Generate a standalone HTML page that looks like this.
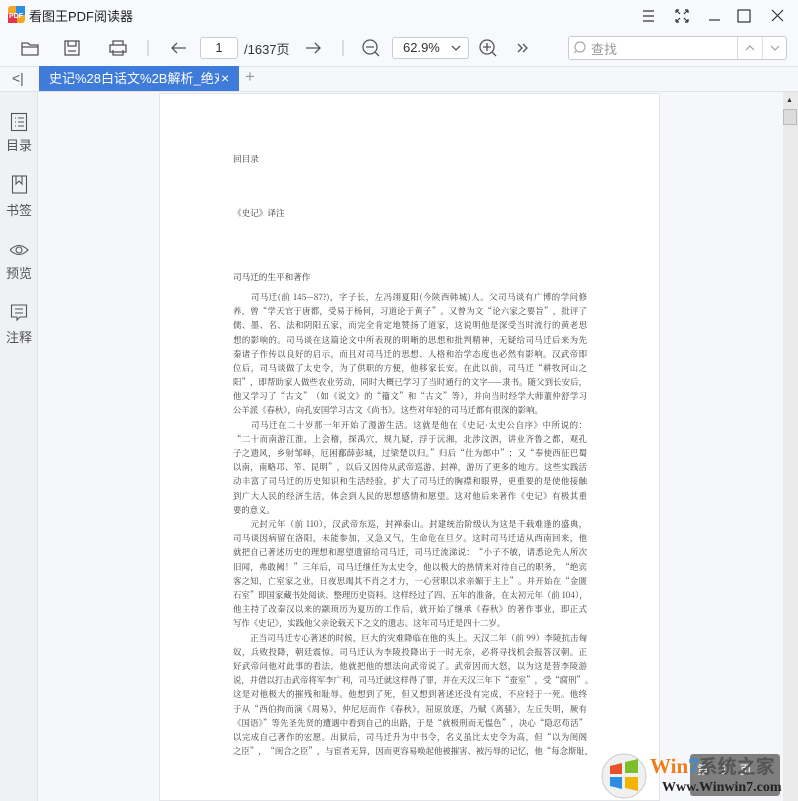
<!DOCTYPE html>
<html><head><meta charset="utf-8"><style>
*{margin:0;padding:0;box-sizing:border-box}
body{width:798px;height:801px;overflow:hidden;background:#f5f7fa;font-family:"Liberation Sans","Noto Sans CJK SC",sans-serif;position:relative;color:#333}
.abs{position:absolute}
#title{left:0;top:0;width:798px;height:66px;background:#f7f9fc}
#tabs{left:0;top:66px;width:798px;height:26px;background:#f5f7fa;border-top:1px solid #e3e6ea;border-bottom:1px solid #dfe2e6}
#side{left:0;top:92px;width:38px;height:709px;background:#eff1f4;border-right:1px solid #e0e3e7}
.sl{position:absolute;left:0;width:38px;text-align:center;font-size:13px;color:#555}
#page{left:159px;top:93px;width:501px;height:708px;background:#fff;border:1px solid #e2e4e8}
.t{position:absolute;left:233px;width:354px;font-family:"Noto Serif CJK SC","Liberation Serif",serif;font-size:8.4px;line-height:10px;color:#3a3a3a;white-space:nowrap;text-align:justify;text-align-last:justify}
.t.l{text-align-last:left}
.h{position:absolute;left:233px;font-family:"Noto Serif CJK SC",serif;font-size:8.6px;color:#333}
svg{position:absolute}
</style></head><body>
<div id="title" class="abs"></div>
<svg style="left:8px;top:6px" width="17" height="17"><rect width="17" height="17" rx="3" fill="#f5a623"/><rect x="0" y="8" width="9" height="9" fill="#e2344b"/><rect x="8" y="0" width="9" height="9" fill="#2d8de3"/><text x="1" y="12" font-size="7" fill="#fff" font-family="Liberation Sans" font-weight="bold">PDF</text></svg>
<div class="abs" style="left:29px;top:6px;font-size:13px;color:#222">看图王PDF阅读器</div>
<svg style="left:640px;top:8px" width="150" height="16" fill="none" stroke="#333" stroke-width="1.2">
<path d="M3 3h11M3 8h11M3 13h11"/>
<path d="M36 2l4 4M36 2h3M36 2v3M48 2l-4 4M48 2h-3M48 2v3M36 14l4-4M36 14h3M36 14v-3M48 14l-4-4M48 14h-3M48 14v-3"/>
<path d="M69 12h11"/>
<rect x="98" y="2" width="12" height="12"/>
<path d="M132 2l11 11M143 2l-11 11"/>
</svg>
<svg style="left:18px;top:37px" width="350" height="22" fill="none" stroke="#555" stroke-width="1.3">
<path d="M4 6h6l2 2h8v10H4z M4 10h16"/>
<rect x="47" y="4" width="14" height="14"/><path d="M50 4v5h8V4M50 14h8"/>
<rect x="92" y="8" width="16" height="7"/><path d="M95 8V4h10v4M95 13v5h10v-5"/>
<path d="M130 3v16" stroke="#ccc"/>
<path d="M168 11h-14M159 6l-5 5 5 5"/>
</svg>
<div class="abs" style="left:200px;top:37px;width:38px;height:22px;border:1px solid #c9cdd2;border-radius:3px;background:#fff;font-size:13px;text-align:center;line-height:20px">1</div>
<div class="abs" style="left:244px;top:39px;font-size:13px;color:#333">/1637页</div>
<svg style="left:300px;top:37px" width="240" height="24" fill="none" stroke="#555" stroke-width="1.3">
<path d="M6 11h14M15 6l5 5-5 5"/>
<path d="M43 3v16" stroke="#ccc"/>
<circle cx="70" cy="10" r="7"/><path d="M66 10h8M75 15l4 4"/>
<circle cx="187" cy="10" r="7"/><path d="M183 10h8M187 6v8M192 15l4 4"/>
<path d="M218 7l4 4-4 4M223 7l4 4-4 4"/>
</svg>
<div class="abs" style="left:392px;top:37px;width:77px;height:22px;border:1px solid #c9cdd2;border-radius:3px;background:#fff;font-size:13px;line-height:20px;padding-left:10px">62.9%<svg style="left:58px;top:7px" width="10" height="7" fill="none" stroke="#555" stroke-width="1.3"><path d="M1 1l4 4 4-4"/></svg></div>
<div class="abs" style="left:568px;top:36px;width:219px;height:24px;border:1px solid #c9cdd2;border-radius:3px;background:#fff"></div>
<svg style="left:573px;top:40px" width="14" height="16" fill="none" stroke="#aaa" stroke-width="1.2"><circle cx="7" cy="7" r="5"/><path d="M3 11l-2 2"/></svg>
<div class="abs" style="left:591px;top:39px;font-size:13px;color:#999">查找</div>
<div class="abs" style="left:737px;top:37px;width:1px;height:22px;background:#ddd"></div>
<div class="abs" style="left:762px;top:37px;width:1px;height:22px;background:#ddd"></div>
<svg style="left:744px;top:44px" width="40" height="8" fill="none" stroke="#999" stroke-width="1.1"><path d="M2 6l4-4 4 4M27 2l4 4 4-4"/></svg>
<div id="tabs" class="abs"></div>
<div class="abs" style="left:12px;top:70px;font-size:14px;color:#555">&lt;|</div>
<div class="abs" style="left:39px;top:66px;width:200px;height:25px;background:#3f7bd9;"></div>
<div class="abs" style="left:49px;top:66px;width:170px;height:25px;color:#fff;font-size:13px;line-height:25px;white-space:nowrap;overflow:hidden">史记%28白话文%2B解析_绝对<span style="opacity:.5">全</span></div>
<div class="abs" style="left:221px;top:66px;color:#fff;font-size:14px;line-height:25px">×</div>
<div class="abs" style="left:245px;top:67px;font-size:17px;color:#999">+</div>
<div id="side" class="abs"></div>
<svg style="left:10px;top:112px" width="20" height="220" fill="none" stroke="#555" stroke-width="1.1">
<rect x="1.5" y="1.5" width="15" height="17"/><path d="M5 6h1M8 6h6M5 10h1M8 10h6M5 14h1M8 14h6"/>
<rect x="2.5" y="64" width="14" height="17"/><path d="M6 64v8l3-3 3 3v-8"/>
<path d="M0 138q9-9 18 0q-9 9-18 0z"/><circle cx="9" cy="138" r="3"/>
<path d="M1.5 193h15v12H10l-3 3v-3H1.5z M5 197h8M5 201h8"/>
</svg>
<div class="sl" style="top:135px">目录</div>
<div class="sl" style="top:200px">书签</div>
<div class="sl" style="top:263px">预览</div>
<div class="sl" style="top:327px">注释</div>
<div id="page" class="abs"></div>
<div class="abs" style="left:783px;top:92px;width:15px;height:709px;background:#eaeaea"></div>
<div class="abs" style="left:783px;top:109px;width:14px;height:16px;background:#dcdcdc;border:1px solid #bbb"></div>
<div class="abs" style="left:786px;top:97px;font-size:7px;color:#333">▲</div>
<div class="h" style="top:153px">回目录</div>
<div class="h" style="top:207px">《史记》译注</div>
<div class="h" style="top:271px">司马迁的生平和著作</div>
<div class="t" style="top:292px">　　司马迁(前 145—87?)，字子长，左冯翊夏阳(今陕西韩城)人。父司马谈有广博的学问修</div>
<div class="t" style="top:306px">养，曾“学天官于唐都，受易于杨何，习道论于黄子”。又曾为文“论六家之要旨”，批评了</div>
<div class="t" style="top:320px">儒、墨、名、法和阴阳五家，而完全肯定地赞扬了道家，这说明他是深受当时流行的黄老思</div>
<div class="t" style="top:335px">想的影响的。司马谈在这篇论文中所表现的明晰的思想和批判精神，无疑给司马迁后来为先</div>
<div class="t" style="top:349px">秦诸子作传以良好的启示，而且对司马迁的思想、人格和治学态度也必然有影响。汉武帝即</div>
<div class="t" style="top:363px">位后，司马谈做了太史令，为了供职的方便，他移家长安。在此以前，司马迁“耕牧河山之</div>
<div class="t" style="top:377px">阳”，即帮助家人做些农业劳动，同时大概已学习了当时通行的文字——隶书。随父到长安后，</div>
<div class="t" style="top:391px">他又学习了“古文”（如《说文》的“籀文”和“古文”等），并向当时经学大师董仲舒学习</div>
<div class="t l" style="top:405px">公羊派《春秋》，向孔安国学习古文《尚书》。这些对年轻的司马迁都有很深的影响。</div>
<div class="t" style="top:420px">　　司马迁在二十岁那一年开始了漫游生活。这就是他在《史记·太史公自序》中所说的：</div>
<div class="t" style="top:434px">“二十而南游江淮，上会稽，探禹穴，规九疑，浮于沅湘，北涉汶泗，讲业齐鲁之都，观孔</div>
<div class="t" style="top:448px">子之遗风，乡射邹峄，厄困鄱薛彭城，过梁楚以归。”归后“仕为郎中”；又“奉使西征巴蜀</div>
<div class="t" style="top:462px">以南，南略邛、笮、昆明”，以后又因侍从武帝巡游、封禅，游历了更多的地方。这些实践活</div>
<div class="t" style="top:476px">动丰富了司马迁的历史知识和生活经验，扩大了司马迁的胸襟和眼界，更重要的是使他接触</div>
<div class="t" style="top:491px">到广大人民的经济生活，体会到人民的思想感情和愿望。这对他后来著作《史记》有极其重</div>
<div class="t l" style="top:505px">要的意义。</div>
<div class="t" style="top:519px">　　元封元年（前 110），汉武帝东巡，封禅泰山。封建统治阶级认为这是千载难逢的盛典，</div>
<div class="t" style="top:533px">司马谈因病留在洛阳，未能参加，又急又气，生命危在旦夕。这时司马迁适从西南回来，他</div>
<div class="t" style="top:547px">就把自己著述历史的理想和愿望遗留给司马迁，司马迁流涕说：“小子不敏，请悉论先人所次</div>
<div class="t" style="top:562px">旧闻，弗敢阙！”三年后，司马迁继任为太史令，他以极大的热情来对待自己的职务，“绝宾</div>
<div class="t" style="top:576px">客之知，亡室家之业，日夜思竭其不肖之才力，一心营职以求亲媚于主上”。并开始在“金匮</div>
<div class="t" style="top:590px">石室”即国家藏书处阅读、整理历史资料。这样经过了四、五年的准备，在太初元年（前 104），</div>
<div class="t" style="top:604px">他主持了改秦汉以来的颛顼历为夏历的工作后，就开始了继承《春秋》的著作事业，即正式</div>
<div class="t l" style="top:618px">写作《史记》，实践他父亲论载天下之文的遗志。这年司马迁是四十二岁。</div>
<div class="t" style="top:633px">　　正当司马迁专心著述的时候，巨大的灾难降临在他的头上。天汉二年（前 99）李陵抗击匈</div>
<div class="t" style="top:647px">奴，兵败投降，朝廷震惊。司马迁认为李陵投降出于一时无奈，必将寻找机会报答汉朝。正</div>
<div class="t" style="top:661px">好武帝问他对此事的看法，他就把他的想法向武帝说了。武帝因而大怒，以为这是替李陵游</div>
<div class="t" style="top:675px">说，并借以打击武帝将军李广利，司马迁就这样得了罪，并在天汉三年下“蚕室”，受“腐刑”。</div>
<div class="t" style="top:689px">这是对他极大的摧残和耻辱。他想到了死，但又想到著述还没有完成，不应轻于一死。他终</div>
<div class="t" style="top:704px">于从“西伯拘而演《周易》，仲尼厄而作《春秋》，屈原放逐，乃赋《离骚》，左丘失明，厥有</div>
<div class="t" style="top:718px">《国语》”等先圣先贤的遭遇中看到自己的出路，于是“就极刑而无愠色”，决心“隐忍苟活”</div>
<div class="t" style="top:732px">以完成自己著作的宏愿。出狱后，司马迁升为中书令，名义虽比太史令为高，但“以为闺阁</div>
<div class="t" style="top:746px">之臣”，“闺合之臣”，与宦者无异，因而更容易唤起他被摧害、被污辱的记忆，他“每念斯耻，</div>
<div class="abs" style="left:690px;top:754px;width:90px;height:42px;background:#6a6a6a;opacity:.85;border-radius:3px"></div>
<div class="abs" style="left:697px;top:761px;font-size:12px;color:#fff">第　1　页</div>
<svg style="left:600px;top:752px" width="50" height="48"><circle cx="24" cy="24" r="22" fill="#eef0f2" stroke="#ccc"/><path d="M10 14l12-3v11H10z" fill="#e8502a"/><path d="M25 10l13-3v14H25z" fill="#7bbf2a"/><path d="M10 25h12v12l-12-3z" fill="#2d8de3"/><path d="M25 25h13v14l-13-3z" fill="#f4b400"/></svg>
<div class="abs" style="left:650px;top:752px;font-family:'Liberation Serif',serif;font-weight:bold;font-size:21px;color:#f07d1a;white-space:nowrap">Win<span style="color:#2d8de3">7</span><span style="font-family:'Noto Sans CJK SC';color:#555;font-size:19px">系统之家</span></div>
<div class="abs" style="left:662px;top:780px;font-family:'Liberation Serif',serif;font-weight:bold;font-size:14px;color:#222">Www.Winwin7.com</div>
</body></html>
